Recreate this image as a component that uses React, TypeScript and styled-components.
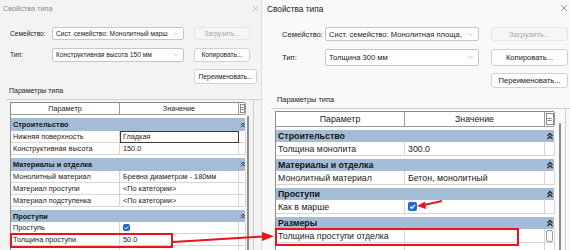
import React from "react";
import styled, { createGlobalStyle } from "styled-components";
import { X, ChevronDown } from "lucide-react";

type Metrics = {
  width: number;
  active: boolean;
  titleFont: number;
  titleX: number;
  font: number;
  formLeft: number;
  labelW: number;
  comboW: number;
  btnGap: number;
  btnW: number;
  renameW: number;
  rows: [number, number, number];
  sectionTop: number;
  sectionH: number;
  sectionX: number;
  sectionFont: number;
  frameTop: number;
  tableX: number;
  cols: [number, number, number];
  headH: number;
  groupH: number;
  rowH: number;
  groupGap: number;
  tableFont: number;
  check: number;
  trackW: number;
  thumbTop: number;
  thumbLeft: number;
};

const LEFT: Metrics = {
  width: 261,
  active: false,
  titleFont: 7.3,
  titleX: 3,
  font: 6.6,
  formLeft: 10,
  labelW: 42,
  comboW: 132,
  btnGap: 10,
  btnW: 56,
  renameW: 63,
  rows: [13, 14, 15],
  sectionTop: 2,
  sectionH: 10,
  sectionX: 9,
  sectionFont: 7,
  frameTop: 3,
  tableX: 10,
  cols: [109, 119, 7],
  headH: 13,
  groupH: 12.5,
  rowH: 12,
  groupGap: 3.25,
  tableFont: 7.3,
  check: 7,
  trackW: 9,
  thumbTop: 14,
  thumbLeft: 2,
};

const RIGHT: Metrics = {
  width: 309,
  active: true,
  titleFont: 8.3,
  titleX: 5,
  font: 7.6,
  formLeft: 20,
  labelW: 43,
  comboW: 154,
  btnGap: 12,
  btnW: 77,
  renameW: 77,
  rows: [14, 17, 15],
  sectionTop: 6,
  sectionH: 12,
  sectionX: 15,
  sectionFont: 7.4,
  frameTop: 2,
  tableX: 13,
  cols: [129, 140, 10],
  headH: 16,
  groupH: 12,
  rowH: 14,
  groupGap: 3,
  tableFont: 8.8,
  check: 9,
  trackW: 12,
  thumbTop: 12,
  thumbLeft: 5,
};

const GlobalStyle = createGlobalStyle`
  html, body {
    margin: 0;
    padding: 0;
    background: #ffffff;
  }
  body {
    overflow: hidden;
  }
  #root {
    width: 570px;
    height: 250px;
  }
`;

const Stage = styled.div`
  position: relative;
  display: flex;
  width: 570px;
  height: 250px;
  overflow: hidden;
  font-family: "Liberation Sans", Arial, sans-serif;
  color: #1b1b1b;
`;

const Dialog = styled.section<{ $m: Metrics }>`
  flex: 0 0 ${({ $m }) => $m.width}px;
  height: 250px;
  display: flex;
  flex-direction: column;
  overflow: hidden;
  box-sizing: border-box;
  background: ${({ $m }) => ($m.active ? "#f9f9f9" : "#f3f3f3")};
  border-left: ${({ $m }) => ($m.active ? "1px solid #dddddd" : "none")};
`;

const TitleBar = styled.header<{ $m: Metrics }>`
  height: 17px;
  flex: 0 0 17px;
  display: flex;
  align-items: center;
  justify-content: space-between;
  padding: 0 1px 0 ${({ $m }) => $m.titleX}px;
  font-size: ${({ $m }) => $m.titleFont}px;
  color: ${({ $m }) => ($m.active ? "#1a1a1a" : "#8e8e8e")};
  white-space: nowrap;
`;

/* label | combo | spacer | button */
const Form = styled.div<{ $m: Metrics }>`
  display: grid;
  grid-template-columns: ${({ $m }) => `${$m.labelW}px ${$m.comboW}px ${$m.btnGap}px ${$m.btnW}px`};
  grid-template-rows: ${({ $m }) => $m.rows.map((r) => `${r}px`).join(" ")};
  row-gap: 7.5px;
  margin: 10px 0 0 ${({ $m }) => $m.formLeft}px;
  font-size: ${({ $m }) => $m.font}px;
`;

const Label = styled.span`
  grid-column: 1;
  align-self: center;
  white-space: nowrap;
`;

const Combo = styled.div`
  grid-column: 2;
  display: flex;
  align-items: center;
  justify-content: space-between;
  gap: 2px;
  padding: 0 3px 0 3px;
  background: #ffffff;
  border: 1px solid #c6c6c6;
  border-radius: 2px;
  overflow: hidden;
  box-sizing: border-box;
`;

const ComboText = styled.span`
  overflow: hidden;
  white-space: nowrap;
`;

const Button = styled.div<{ $disabled?: boolean; $w?: number }>`
  grid-column: 4;
  display: flex;
  align-items: center;
  justify-content: center;
  width: ${({ $w }) => ($w ? `${$w}px` : "auto")};
  box-sizing: border-box;
  background: ${({ $disabled }) => ($disabled ? "#f6f6f6" : "#fefefe")};
  border: 1px solid ${({ $disabled }) => ($disabled ? "#e6e6e6" : "#d2d2d2")};
  border-radius: 3px;
  color: ${({ $disabled }) => ($disabled ? "#a8a8a8" : "#1b1b1b")};
  white-space: nowrap;
`;

const SectionLabel = styled.div<{ $m: Metrics }>`
  margin: ${({ $m }) => $m.sectionTop}px 0 0 ${({ $m }) => $m.sectionX}px;
  height: ${({ $m }) => $m.sectionH}px;
  line-height: ${({ $m }) => $m.sectionH}px;
  font-size: ${({ $m }) => $m.sectionFont}px;
  color: #222;
`;

const Frame = styled.div<{ $m: Metrics }>`
  display: flex;
  align-items: flex-start;
  margin: ${({ $m }) => $m.frameTop}px 0 0 ${({ $m }) => $m.tableX - 4}px;
  padding: 2px 0 0 4px;
  border-top: 1px solid #d2d2d2;
  flex: 1;
`;

const Grid = styled.div<{ $m: Metrics }>`
  display: flex;
  flex-direction: column;
  width: ${({ $m }) => $m.cols.reduce((a, b) => a + b, 0)}px;
  flex: 0 0 auto;
  background: #ffffff;
  border-left: 1px solid #8d8d8d;
  font-size: ${({ $m }) => $m.tableFont}px;
  box-sizing: border-box;
`;

const HeadRow = styled.div<{ $m: Metrics }>`
  display: grid;
  grid-template-columns: ${({ $m }) => $m.cols.map((c) => `${c}px`).join(" ")};
  height: ${({ $m }) => $m.headH}px;
  border-top: 1px solid #8d8d8d;
  border-bottom: 1px solid #9a9a9a;
  box-sizing: border-box;
`;

const HeadCell = styled.div<{ $box?: boolean }>`
  display: flex;
  align-items: center;
  justify-content: center;
  border-right: 1px solid #9a9a9a;
  outline: ${({ $box }) => ($box ? "1px solid #8a8a8a" : "none")};
  outline-offset: -2px;
  color: #222;
`;

const GroupRow = styled.div<{ $m: Metrics }>`
  display: grid;
  grid-template-columns: ${({ $m }) => `${$m.cols[0] + $m.cols[1]}px ${$m.cols[2]}px`};
  align-items: center;
  margin-top: ${({ $m }) => $m.groupGap}px;
  height: ${({ $m }) => $m.groupH}px;
  background: #a3bcd8;
  font-weight: bold;
  color: #141414;
`;

const GroupTitle = styled.span`
  padding-left: 2px;
  white-space: nowrap;
`;

const GroupIcon = styled.span`
  display: flex;
  justify-content: center;
`;

const DataRow = styled.div<{ $m: Metrics }>`
  display: grid;
  grid-template-columns: ${({ $m }) => $m.cols.map((c) => `${c}px`).join(" ")};
  height: ${({ $m }) => $m.rowH}px;
`;

const Cell = styled.div<{ $focus?: boolean; $pad?: number }>`
  display: flex;
  align-items: center;
  padding-left: ${({ $pad }) => $pad ?? 2}px;
  border-right: 1px solid #d6d6d6;
  border-bottom: 1px solid #d6d6d6;
  box-sizing: border-box;
  white-space: nowrap;
  overflow: hidden;
  outline: ${({ $focus }) => ($focus ? "1px solid #3a3a3a" : "none")};
  outline-offset: -1px;
`;

const Check = styled.span<{ $s: number }>`
  display: flex;
  align-items: center;
  justify-content: center;
  width: ${({ $s }) => $s}px;
  height: ${({ $s }) => $s}px;
  border-radius: 2px;
  background: #1b6ccc;
`;

const MiniBox = styled.span`
  width: 5px;
  height: 10px;
  margin-left: 1px;
  border: 1px solid #9a9a9a;
  border-radius: 2px;
  background: #fafafa;
`;

const Track = styled.div<{ $m: Metrics }>`
  align-self: stretch;
  width: ${({ $m }) => $m.trackW}px;
  margin-top: -3px;
  border-right: 1px solid #cfcfcf;
  box-sizing: border-box;
`;

const Thumb = styled.div<{ $m: Metrics }>`
  width: 2px;
  height: 200px;
  margin: ${({ $m }) => $m.thumbTop + 3}px 0 0 ${({ $m }) => $m.thumbLeft}px;
  background: #8c8c8c;
  border-radius: 1px;
`;

const Overlay = styled.svg`
  position: absolute;
  left: 0;
  top: 0;
  pointer-events: none;
`;

type Row =
  | { kind: "group"; title: string }
  | { kind: "row"; name: string; value?: string; check?: boolean; focus?: boolean; mini?: boolean };

const leftRows: Row[] = [
  { kind: "group", title: "Строительство" },
  { kind: "row", name: "Нижняя поверхность", value: "Гладкая", focus: true },
  { kind: "row", name: "Конструктивная высота", value: "150.0" },
  { kind: "group", title: "Материалы и отделка" },
  { kind: "row", name: "Монолитный материал", value: "Бревна диаметром - 180мм" },
  { kind: "row", name: "Материал проступи", value: "<По категории>" },
  { kind: "row", name: "Материал подступенка", value: "<По категории>" },
  { kind: "group", title: "Проступи" },
  { kind: "row", name: "Проступь", check: true },
  { kind: "row", name: "Толщина проступи", value: "50.0" },
  { kind: "row", name: "", value: "" },
];

const rightRows: Row[] = [
  { kind: "group", title: "Строительство" },
  { kind: "row", name: "Толщина монолита", value: "300.0" },
  { kind: "group", title: "Материалы и отделка" },
  { kind: "row", name: "Монолитный материал", value: "Бетон, монолитный" },
  { kind: "group", title: "Проступи" },
  { kind: "row", name: "Как в марше", check: true },
  { kind: "group", title: "Размеры" },
  { kind: "row", name: "Толщина проступи отделка", value: "", mini: true },
  { kind: "row", name: "", value: "" },
];

const Collapse = ({ size }: { size: number }) => (
  <svg width={size} height={size} viewBox="0 0 8 8" fill="none" stroke="#2a2a2a" strokeWidth="1.3">
    <polyline points="1.5,4 4,1.5 6.5,4" />
    <polyline points="1.5,7 4,4.5 6.5,7" />
  </svg>
);

const Tick = ({ size }: { size: number }) => (
  <svg width={size} height={size} viewBox="0 0 10 10" fill="none" stroke="#ffffff" strokeWidth="1.4">
    <polyline points="2.5,5.2 4.3,7 7.8,3.2" />
  </svg>
);

const TypeDialog: React.FC<{
  m: Metrics;
  family: string;
  type: string;
  rows: Row[];
}> = ({ m, family, type, rows }) => (
  <Dialog $m={m}>
    <TitleBar $m={m}>
      <span>Свойства типа</span>
      <X size={m.titleFont + 2} strokeWidth={1.2} color={m.active ? "#333" : "#8e8e8e"} />
    </TitleBar>

    <Form $m={m}>
      <Label>Семейство:</Label>
      <Combo>
        <ComboText>{family}</ComboText>
        <ChevronDown size={m.font + 1} strokeWidth={1.3} color="#8a8a8a" />
      </Combo>
      <Button $disabled>Загрузить...</Button>

      <Label>Тип:</Label>
      <Combo>
        <ComboText>{type}</ComboText>
        <ChevronDown size={m.font + 1} strokeWidth={1.3} color="#8a8a8a" />
      </Combo>
      <Button>Копировать...</Button>

      <Button $w={m.renameW}>Переименовать...</Button>
    </Form>

    <SectionLabel $m={m}>Параметры типа</SectionLabel>

    <Frame $m={m}>
      <Grid $m={m}>
        <HeadRow $m={m}>
          <HeadCell>Параметр</HeadCell>
          <HeadCell>Значение</HeadCell>
          <HeadCell $box>=</HeadCell>
        </HeadRow>
        {rows.map((r, i) =>
          r.kind === "group" ? (
            <GroupRow key={i} $m={m}>
              <GroupTitle>{r.title}</GroupTitle>
              <GroupIcon>
                <Collapse size={m.check - 1} />
              </GroupIcon>
            </GroupRow>
          ) : (
            <DataRow key={i} $m={m}>
              <Cell>{r.name}</Cell>
              <Cell $focus={r.focus} $pad={3}>
                {r.check ? (
                  <Check $s={m.check}>
                    <Tick size={m.check} />
                  </Check>
                ) : (
                  r.value
                )}
              </Cell>
              <Cell $pad={0}>{r.mini && <MiniBox />}</Cell>
            </DataRow>
          )
        )}
      </Grid>
      <Track $m={m}>
        <Thumb $m={m} />
      </Track>
    </Frame>
  </Dialog>
);

const Annotations = () => (
  <Overlay width={570} height={250} viewBox="0 0 570 250">
    <rect x={11} y={234} width={161} height={13} fill="none" stroke="#e8141c" strokeWidth={2} />
    <rect x={276} y={229} width={242} height={16} fill="none" stroke="#e8141c" strokeWidth={2} />
    <line x1={173} y1={242} x2={263} y2={236.5} stroke="#e8141c" strokeWidth={2} />
    <polygon points="262,232 274,236.3 262,241" fill="#e8141c" />
    <line x1={442} y1={201} x2={424} y2={205} stroke="#e8141c" strokeWidth={2} />
    <polygon points="425,201.5 417,206 426,209" fill="#e8141c" />
  </Overlay>
);

export default function App() {
  return (
    <>
      <GlobalStyle />
      <Stage>
        <TypeDialog
          m={LEFT}
          family="Сист. семейство: Монолитный марш"
          type="Конструктивная высота 150 мм"
          rows={leftRows}
        />
        <TypeDialog
          m={RIGHT}
          family="Сист. семейство: Монолитная площа,"
          type="Толщина 300 мм"
          rows={rightRows}
        />
        <Annotations />
      </Stage>
    </>
  );
}
